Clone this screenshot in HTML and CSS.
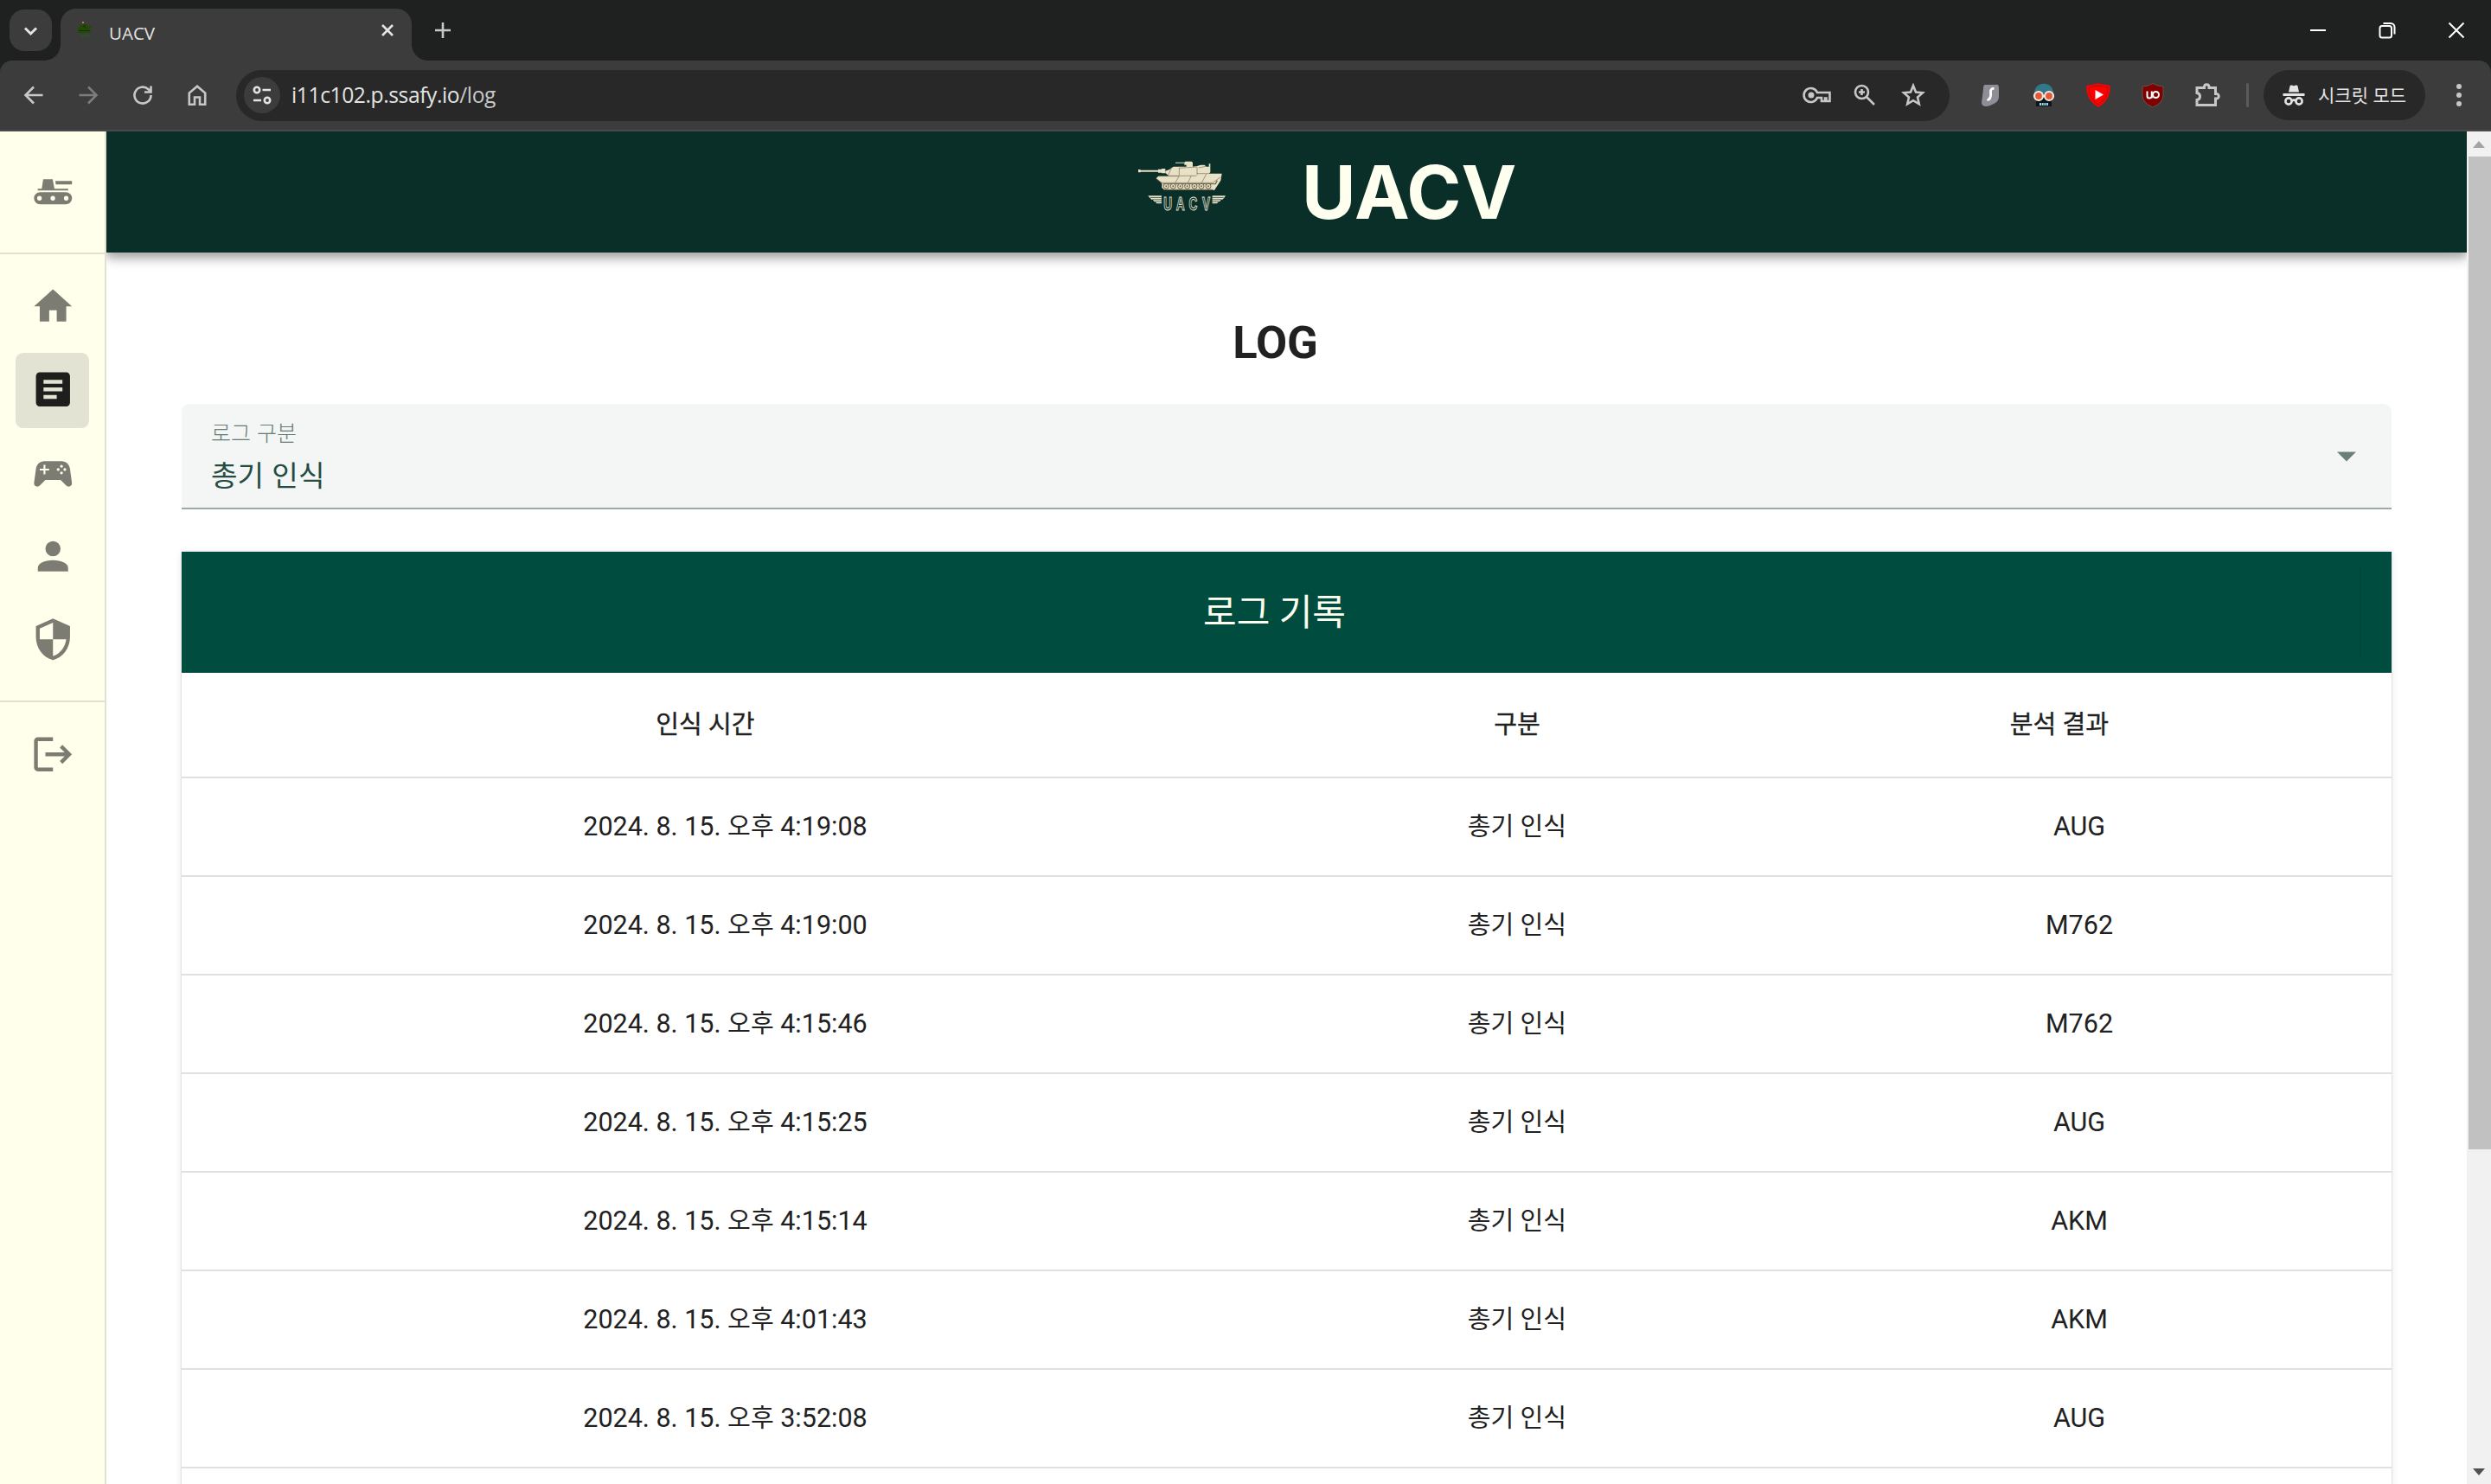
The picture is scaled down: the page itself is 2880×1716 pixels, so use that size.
FILE: index.html
```html
<!DOCTYPE html>
<html lang="ko">
<head>
<meta charset="utf-8">
<title>UACV</title>
<link rel="stylesheet" href="styles.css">
</head>
<body>
<div class="browser">
  <div class="tabstrip">
    <button class="tab-search"><svg width="48" height="48" viewBox="0 0 48 48"><path d="M18 21.500L24.500 28L31 21.500" class="ln w3"/></svg></button>
    <div class="tab">
      <svg class="favicon" width="18" height="20" viewBox="0 0 18 20"><path d="M3 7L6 4H11L13 6H17V8H14L16 10V14H1V9Z" fill="#244a07"/><path d="M6 1H8V3H6Z" fill="#b9821c"/><path d="M4 16H14V19H5Z" fill="#2f4d27"/><path d="M7 7L8.500 5L10 9M2 11.500H15" stroke="#173004" fill="none"/></svg>
      <span class="tab-title">UACV</span>
      <svg class="tab-close" width="16" height="16" viewBox="0 0 16 16"><path d="M2 2L14 14M14 2L2 14" class="ln w25"/></svg>
    </div>
    <svg class="new-tab" width="20" height="20" viewBox="0 0 20 20"><path d="M10 1V19M1 10H19" class="ln grey w25"/></svg>
    <div class="window-controls">
      <svg width="20" height="20" viewBox="0 0 20 20"><path d="M1 10H19" class="ln white w2"/></svg>
      <svg width="20" height="20" viewBox="0 0 20 20"><rect x="1.500" y="5" width="13.500" height="13.500" rx="2.500" class="ln white w2"/><path d="M5.500 2H14A4.500 4.500 0 0 1 18.500 6.500V14.500" class="ln white w2"/></svg>
      <svg width="20" height="20" viewBox="0 0 20 20"><path d="M1.500 1.500L18.500 18.500M18.500 1.500L1.500 18.500" class="ln white w2"/></svg>
    </div>
  </div>
  <div class="toolbar">
    <div class="nav-buttons">
      <svg width="24" height="26" viewBox="0 0 24 26"><path d="M22.500 13H3M12 3.500L2.500 13L12 22.500" class="ln grey w25"/></svg>
      <svg width="24" height="26" viewBox="0 0 24 26"><path d="M1.500 13H21M12 3.500L21.500 13L12 22.500" class="ln dim w25"/></svg>
      <svg width="24" height="26" viewBox="0 0 24 26"><path d="M21.500 13A9.500 9.500 0 1 1 18.500 6.200L21 8.800M21.500 2.500V9.500H14" class="ln grey w25"/></svg>
      <svg width="24" height="26" viewBox="0 0 24 26"><path d="M2.800 23.700V10.500L12 2.800L21.200 10.500V23.700H15V15.500H9V23.700Z" class="ln grey w25"/></svg>
    </div>
    <div class="omnibox">
      <span class="site-info"><svg width="24" height="24" viewBox="0 0 24 24"><circle cx="6" cy="6" r="3.200" class="ln w25"/><path d="M12.500 6H22M2 18H11" class="ln w25"/><circle cx="18" cy="18" r="3.200" class="ln w25"/></svg></span>
      <span class="url">i11c102.p.ssafy.io<span class="path">/log</span></span>
      <div class="omni-icons">
        <svg width="34" height="26" viewBox="0 0 34 26"><path d="M17 10A8 8 0 1 0 17 16H22V20H26V16.500H27.500V20H31.500V10Z" class="ln grey w25"/><circle cx="10" cy="13" r="3.500" fill="#c7c7c7"/></svg>
        <svg width="28" height="28" viewBox="0 0 28 28"><circle cx="10.500" cy="10.500" r="7.500" class="ln grey w25"/><path d="M16 16L25 25M10.500 7V14M7 10.500H14" class="ln grey w25"/></svg>
        <svg width="28" height="28" viewBox="0 0 28 28"><path d="M14 3L17 10.500L25 11.200L19 16.500L20.800 24.300L14 20.200L7.200 24.300L9 16.500L3 11.200L11 10.500Z" class="ln grey w25"/></svg>
      </div>
    </div>
    <div class="extensions">
      <svg width="28" height="30" viewBox="0 0 28 30"><path d="M8 3H20Q24 2 24 7V17Q24 21 20 24L14 27Q5 30 4 24Q5 16 6 8Q6 3 8 3Z" fill="#8e8e96"/><path d="M18.500 7.500Q14 7 14.500 12T14 17.500Q13 21 10.500 20" fill="none" stroke="#fff" stroke-width="2.800"/></svg>
      <svg width="28" height="30" viewBox="0 0 28 30"><path d="M3 13C3 -2 25 -2 25 13L23 14H5Z" fill="#30798b"/><path d="M5 13H23V28H5Z" fill="#101417"/><path d="M9 25.500H19" stroke="#8edaf0" stroke-width="3" stroke-dasharray="2 .7"/><circle cx="8" cy="16" r="5" fill="#e25b38" stroke="#f6e6df" stroke-width="2.200"/><circle cx="20" cy="16" r="5" fill="#e25b38" stroke="#f6e6df" stroke-width="2.200"/></svg>
      <svg width="30" height="30" viewBox="0 0 30 30"><path d="M1.500 4Q8 2.500 15 1.500Q22 2.500 28.500 4Q30 20 15 29Q0 20 1.500 4Z" fill="#f00"/><path d="M4 6Q15 2.500 26 6Q26.500 19 15 26Q3.500 19 4 6Z" fill="none" stroke="#8c1a16" stroke-width=".8"/><path d="M11.500 9L21 14.500L11.500 20Z" fill="#fff"/></svg>
      <svg width="28" height="30" viewBox="0 0 28 30"><path d="M14 1.500Q20 5 26 5V15Q26 24 14 29Q2 24 2 15V5Q8 5 14 1.500Z" fill="#800000" stroke="#66514f"/><path d="M7.500 10.500V16Q7.500 18.500 10 18.500T12.800 16V10.500V18.500" fill="none" stroke="#fff" stroke-width="2"/><circle cx="17.500" cy="14.500" r="3.500" fill="none" stroke="#fff" stroke-width="2"/></svg>
      <svg width="30" height="30" viewBox="0 0 30 30"><path d="M3 6.500H11.500V5A2.800 2.800 0 0 1 17 5V6.500H24.500V13.500H25.500A2.600 2.600 0 0 1 25.500 19H24.500V26.500H3V20.500Q6.500 20 6.500 16.500T3 12.500Z" class="ln grey w3"/></svg>
    </div>
    <span class="toolbar-divider"></span>
    <div class="incognito">
      <svg width="26" height="26" viewBox="0 0 26 26"><path d="M7 9.500L8.500 2.500Q9 1 10.500 1.500L13 2.200L15.500 1.500Q17 1 17.500 2.500L19 9.500Z" fill="#e3e3e3"/><path d="M0.500 11H25.500V14H.5Z" fill="#e3e3e3"/><circle cx="7" cy="20" r="3.600" class="ln w25"/><circle cx="19" cy="20" r="3.600" class="ln w25"/><path d="M10.500 19.500Q13 17.800 15.500 19.500" class="ln w25"/></svg>
      <span>시크릿 모드</span>
    </div>
    <svg class="menu" width="8" height="28" viewBox="0 0 8 28"><g fill="#c7c7c7"><circle cx="4" cy="4" r="3"/><circle cx="4" cy="14" r="3"/><circle cx="4" cy="24" r="3"/></g></svg>
  </div>
</div>

<div class="app">
  <nav class="rail">
    <div class="rail-top">
      <svg class="mdi" viewBox="106 167 158 158"><path fill-rule="evenodd" d="M151 204H184L190 237H238V243H132V237H146ZM193 210H251V222H195ZM140 249H230A21 21 0 0 1 230 291H140A21 21 0 0 1 140 249ZM138 262A8 8 0 1 0 138 278A8 8 0 1 0 138 262ZM184.500 262A8 8 0 1 0 184.500 278A8 8 0 1 0 184.500 262ZM231 262A8 8 0 1 0 231 278A8 8 0 1 0 231 262Z"/></svg>
    </div>
    <div class="rail-list">
      <a class="rail-item"><svg class="mdi" viewBox="0 0 24 24"><path d="M10,20V14H14V20H19V12H22L12,3L2,12H5V20H10Z"/></svg></a>
      <a class="rail-item active"><svg class="mdi" viewBox="0 0 24 24"><path d="M14,17H7V15H14M17,13H7V11H17M17,9H7V7H17M19,3H5C3.890,3 3,3.890 3,5V19A2,2 0 0,0 5,21H19A2,2 0 0,0 21,19V5C21,3.890 20.100,3 19,3Z"/></svg></a>
      <a class="rail-item"><svg class="mdi" viewBox="0 0 24 24"><path fill-rule="evenodd" d="M7.970,16L5,19C4.670,19.300 4.230,19.500 3.750,19.500A1.750,1.750 0 0,1 2,17.750V17.500L3,10.120C3.210,7.810 5.140,6 7.500,6H16.500C18.860,6 20.790,7.810 21,10.120L22,17.500V17.750A1.750,1.750 0 0,1 20.250,19.500C19.770,19.500 19.330,19.300 19,19L16.030,16H7.970M7,8V10H5V11H7V13H8V11H10V10H8V8H7M16.500,8A.75,.75 0 0,0 15.750,8.750A.75,.75 0 0,0 16.500,9.500A.75,.75 0 0,0 17.250,8.750A.75,.75 0 0,0 16.500,8M14.750,9.750A.75,.75 0 0,0 14,10.500A.75,.75 0 0,0 14.750,11.250A.75,.75 0 0,0 15.500,10.500A.75,.75 0 0,0 14.750,9.750M18.250,9.750A.75,.75 0 0,0 17.500,10.500A.75,.75 0 0,0 18.250,11.250A.75,.75 0 0,0 19,10.500A.75,.75 0 0,0 18.250,9.750M16.500,11.500A.75,.75 0 0,0 15.750,12.250A.75,.75 0 0,0 16.500,13A.75,.75 0 0,0 17.250,12.250A.75,.75 0 0,0 16.500,11.500Z"/></svg></a>
      <a class="rail-item"><svg class="mdi" viewBox="0 0 24 24"><path d="M12,4A4,4 0 0,1 16,8A4,4 0 0,1 12,12A4,4 0 0,1 8,8A4,4 0 0,1 12,4M12,14C16.420,14 20,15.790 20,18V20H4V18C4,15.790 7.580,14 12,14Z"/></svg></a>
      <a class="rail-item"><svg class="mdi" viewBox="0 0 24 24"><path d="M12,12H19C18.470,16.110 15.720,19.780 12,20.920V12H5V6.300L12,3.190M12,1L3,5V11C3,16.550 6.840,21.730 12,23C17.160,21.730 21,16.550 21,11V5L12,1Z"/></svg></a>
    </div>
    <div class="rail-list">
      <a class="rail-item"><svg class="mdi" viewBox="0 0 24 24"><path d="M17 7L15.590 8.410L18.170 11H8V13H18.170L15.590 15.580L17 17L22 12M4 5H12V3H4C2.900 3 2 3.900 2 5V19C2 20.100 2.900 21 4 21H12V19H4V5Z"/></svg></a>
    </div>
  </nav>

  <div class="page">
    <header class="appbar">
      <svg class="logo" width="130" height="90" viewBox="0 0 390 270">
        <g fill="#e9e0c8">
          <path d="M48 78H56V80H117V77H129V75H142V91H129V89H117V86H56V88H48Z"/>
          <path d="M142 83L156 78L170 68H215V62H208V56H177V53H208L212 50H232L237 53V68L252 66L265 62H278L284 68H293V58H298V88L292 92H338L334 116L312 150H142L130 142V126L110 108L118 101H152V98L142 90Z"/>
          <path d="M82 169H129V196H112L106 189H103L98 182H94L88 176Z"/>
          <path d="M351 169H305V196H321L328 189H331L336 182H340L346 176Z"/>
        </g>
        <g fill="none" stroke="#766f50" stroke-width="2">
          <path d="M152 98L164 70M190 72V98M152 100H250M190 73L252 69V97M252 92H292M118 101H190L176 124M232 100L220 124M284 94L268 124M110 110L130 124H306L334 104M258 72L282 67"/>
          <path d="M136 148H308M134 128H316L322 116" stroke-width="4"/>
        </g>
        <g fill="#e9e0c8" stroke="#665f43" stroke-width="3"><circle cx="145" cy="136" r="9"/><circle cx="169" cy="136" r="9"/><circle cx="194" cy="136" r="9"/><circle cx="218" cy="136" r="9"/><circle cx="243" cy="136" r="9"/><circle cx="267" cy="136" r="9"/><circle cx="291" cy="136" r="9"/></g>
        <g fill="#665f43"><circle cx="145" cy="136" r="3"/><circle cx="169" cy="136" r="3"/><circle cx="194" cy="136" r="3"/><circle cx="218" cy="136" r="3"/><circle cx="243" cy="136" r="3"/><circle cx="267" cy="136" r="3"/><circle cx="291" cy="136" r="3"/></g>
        <path d="M90 175.500H129M98 182.500H129M106 189.500H129M344 175.500H305M336 182.500H305M328 189.500H305" stroke="#0a2f28" stroke-width="2"/>
        <text class="logo-text" transform="scale(.62 1)" x="243 313 384 457" y="219" text-anchor="middle">UACV</text>
      </svg>
      <h1>UACV</h1>
    </header>

    <main class="content">
      <h2>LOG</h2>
      <div class="select">
        <div class="select-text">
          <label>로그 구분</label>
          <span class="select-value">총기 인식</span>
        </div>
        <svg width="22" height="12" viewBox="0 0 22 12"><path d="M0 .5H22L11 11.500Z" fill="#688079"/></svg>
      </div>

      <section class="card">
        <div class="card-bar"><span class="card-title">로그 기록</span><i class="card-divider"></i></div>
        <div class="row head"><span>인식 시간</span><span>구분</span><span>분석 결과</span></div>
        <div class="row"><span>2024. 8. 15. <b>오후</b> 4:19:08</span><span><b>총기 인식</b></span><span>AUG</span></div>
        <div class="row"><span>2024. 8. 15. <b>오후</b> 4:19:00</span><span><b>총기 인식</b></span><span>M762</span></div>
        <div class="row"><span>2024. 8. 15. <b>오후</b> 4:15:46</span><span><b>총기 인식</b></span><span>M762</span></div>
        <div class="row"><span>2024. 8. 15. <b>오후</b> 4:15:25</span><span><b>총기 인식</b></span><span>AUG</span></div>
        <div class="row"><span>2024. 8. 15. <b>오후</b> 4:15:14</span><span><b>총기 인식</b></span><span>AKM</span></div>
        <div class="row"><span>2024. 8. 15. <b>오후</b> 4:01:43</span><span><b>총기 인식</b></span><span>AKM</span></div>
        <div class="row"><span>2024. 8. 15. <b>오후</b> 3:52:08</span><span><b>총기 인식</b></span><span>AUG</span></div>
        <div class="row"></div>
      </section>
    </main>
  </div>

  <div class="scrollbar">
    <svg width="14" height="8" viewBox="0 0 14 8"><path d="M7 0L14 8H0Z" fill="#a3a3a3"/></svg>
    <div class="thumb"></div>
    <svg width="14" height="8" viewBox="0 0 14 8"><path d="M7 8L14 0H0Z" fill="#505050"/></svg>
  </div>
</div>
</body>
</html>
```
FILE: styles.css
```css
* { box-sizing: border-box; }
html, body { margin: 0; height: 1716px; overflow: hidden; }
body {
  display: flex;
  flex-direction: column;
  background: #fff;
  color: #212121;
  font-family: Roboto, "Noto Sans CJK KR", sans-serif;
}
svg { display: block; flex: none; }

/* line icons */
.ln { fill: none; stroke: #e3e3e3; }
.grey { stroke: #c7c7c7; }
.dim { stroke: #7c7c7c; }
.white { stroke: #fff; }
.w2 { stroke-width: 2; }
.w25 { stroke-width: 2.6; }
.w3 { stroke-width: 3; }

/* browser frame */
.browser {
  flex: none;
  height: 152px;
  background: #1f2120;
  font-family: "Open Sans", "Noto Sans CJK KR", sans-serif;
}
.tabstrip { display: flex; height: 70px; padding-left: 11px; }
.tab-search {
  width: 49px; height: 48px; margin: 11px 10px 0 0; padding: 0;
  border: 0; border-radius: 17px; background: #3c3c3c;
}
.tab {
  position: relative;
  display: flex;
  align-items: center;
  width: 406px; height: 60px; margin-top: 10px; padding: 0 20px 0 18px;
  border-radius: 18px 18px 0 0;
  background: #3c3c3c;
  color: #e3e3e3;
}
.tab::before, .tab::after {
  content: "";
  position: absolute;
  bottom: 0;
  width: 18px; height: 18px;
}
.tab::before { left: -18px; background: radial-gradient(circle at 0 0, transparent 17.5px, #3c3c3c 18px); }
.tab::after { right: -18px; background: radial-gradient(circle at 100% 0, transparent 17.5px, #3c3c3c 18px); }
.favicon { margin: -12px 19px 0 1px; }
.tab-title { flex: 1; font-size: 20.5px; line-height: 28px; margin-top: -4px; }
.tab-close { margin-top: -10px; }
.new-tab { margin: 25px 0 0 26px; }
.window-controls { display: flex; gap: 60px; margin: 25px 30px 0 auto; }

.toolbar {
  display: flex;
  align-items: center;
  height: 82px;
  border-bottom: 2px solid #4a4a4a;
  border-radius: 14px 14px 0 0;
  background: #3c3c3c;
}
.nav-buttons { display: flex; gap: 39px; width: 273px; padding-left: 27px; }
.omnibox {
  display: flex;
  align-items: center;
  width: 1981px; height: 59px; padding: 0 28px 0 9px;
  border-radius: 30px;
  background: #282828;
}
.site-info {
  display: flex; align-items: center; justify-content: center;
  width: 42px; height: 42px; border-radius: 50%; background: #3c3c3c;
}
.url { flex: 1; margin-left: 13px; color: #e3e3e3; font-size: 24.6px; line-height: 36px; letter-spacing: -.4px; }
.path { color: #c7c7c7; }
.omni-icons { display: flex; align-items: center; gap: 28px; }
.omni-icons svg:first-child { margin-right: -4px; }
.extensions { display: flex; align-items: center; gap: 34px; margin-left: 33px; }
.toolbar-divider { width: 3px; height: 28px; margin: 0 17px 0 30px; background: #5b5b5b; border-radius: 2px; }
.incognito {
  display: flex; align-items: center; gap: 15px;
  width: 187px; height: 58px; padding-left: 22px;
  border-radius: 29px; background: #282828;
  color: #e3e3e3; font-size: 21px; line-height: 30px; white-space: nowrap;
}
.menu { margin-left: 35px; }

/* application */
.app { display: flex; flex: 1; min-height: 0; }
.rail {
  flex: none;
  width: 123px;
  border-right: 2px solid #e1e1d2;
  background: #ffffec;
}
.mdi { width: 52.5px; height: 52.5px; fill: #7c7c73; }
.rail-top {
  display: flex; align-items: center; justify-content: center;
  height: 142px; padding: 0 0 2px 2px;
  border-bottom: 2px solid #e1e1d2;
}
.rail-list { padding: 17.5px 18px; }
.rail-list + .rail-list { border-top: 2px solid #e1e1d2; }
.rail-item {
  display: flex; align-items: center; justify-content: center;
  height: 87.5px; margin-bottom: 8.75px; padding: 0 0 2.5px 2px;
  border-radius: 8.75px;
}
.active { background: #e3e3d4; }
.active .mdi { fill: #1e1e1c; }

.page { flex: 1; min-width: 0; overflow: hidden; }
.appbar {
  position: relative;
  display: flex;
  height: 140px; padding-left: 1177px;
  background: #0a2f28;
  box-shadow: 0 4px 9px rgba(0,0,0,.2), 0 9px 11px rgba(0,0,0,.14), 0 2px 22px rgba(0,0,0,.12);
}
.logo { margin-top: 18px; }
.logo-text { font: bold 66px "Liberation Sans", sans-serif; fill: #0a2f28; stroke: #e9e6d8; stroke-width: 3; }
h1 {
  margin: 0 0 0 75px;
  color: #fffff0;
  font: 700 85.5px/140px Inter, sans-serif;
}
.content { width: 2555px; margin-left: 87px; }
h2 {
  margin: 0; height: 175px; padding: 73px 26px 0 0;
  text-align: center; font-size: 52.5px; line-height: 62px; font-weight: 700;
}
.select {
  display: flex; align-items: center; justify-content: space-between;
  height: 122px; padding: 0 41px 0 34px;
  border-bottom: 2px solid #9aaba7;
  border-radius: 8.75px 8.75px 0 0;
  background: #f4f6f5;
  font-family: "Noto Sans CJK KR", sans-serif;
}
.select svg { margin-top: 2px; }
.select-text { display: flex; flex-direction: column; }
label { color: #647d77; font-size: 25px; line-height: 36px; font-weight: 300; margin-top: -2px; }
.select-value { color: #264b43; font-size: 33.2px; line-height: 48px; margin-top: 7px; }

.card {
  margin-top: 49px;
  box-shadow: 0 0 2px rgba(0,0,0,.2), 0 2px 9px rgba(0,0,0,.1);
}
.card-bar { display: flex; align-items: center; height: 140px; background: #004d40; color: #fffff0; }
.card-title { flex: 1; text-align: center; font-size: 42px; line-height: 60px; padding: 2px 0 0 9px; }
.card-divider { width: 2px; height: 105px; margin-right: 35px; background: #00473a; }
.row {
  display: grid;
  grid-template-columns: 1255px 576px 724px;
  align-items: center;
  height: 113.95px;
  padding-left: 1px;
  border-bottom: 2px solid #e0e0e0;
  text-align: center;
  font-size: 30.5px; line-height: 44px;
}
.row b { font-weight: 400; font-size: 29.1px; }
.head { height: 122px; font-size: 29.1px; font-weight: 400; -webkit-text-stroke: .35px #212121; }
.head span:nth-child(odd) { padding-right: 46px; }

.scrollbar {
  display: flex; flex-direction: column; align-items: center;
  flex: none; width: 28px; padding: 11px 0 10px;
  background: #f1f1f1;
}
.thumb { align-self: flex-end; width: 26px; height: 1148px; margin: 10px 0 auto; background: #c1c1c1; }
```
